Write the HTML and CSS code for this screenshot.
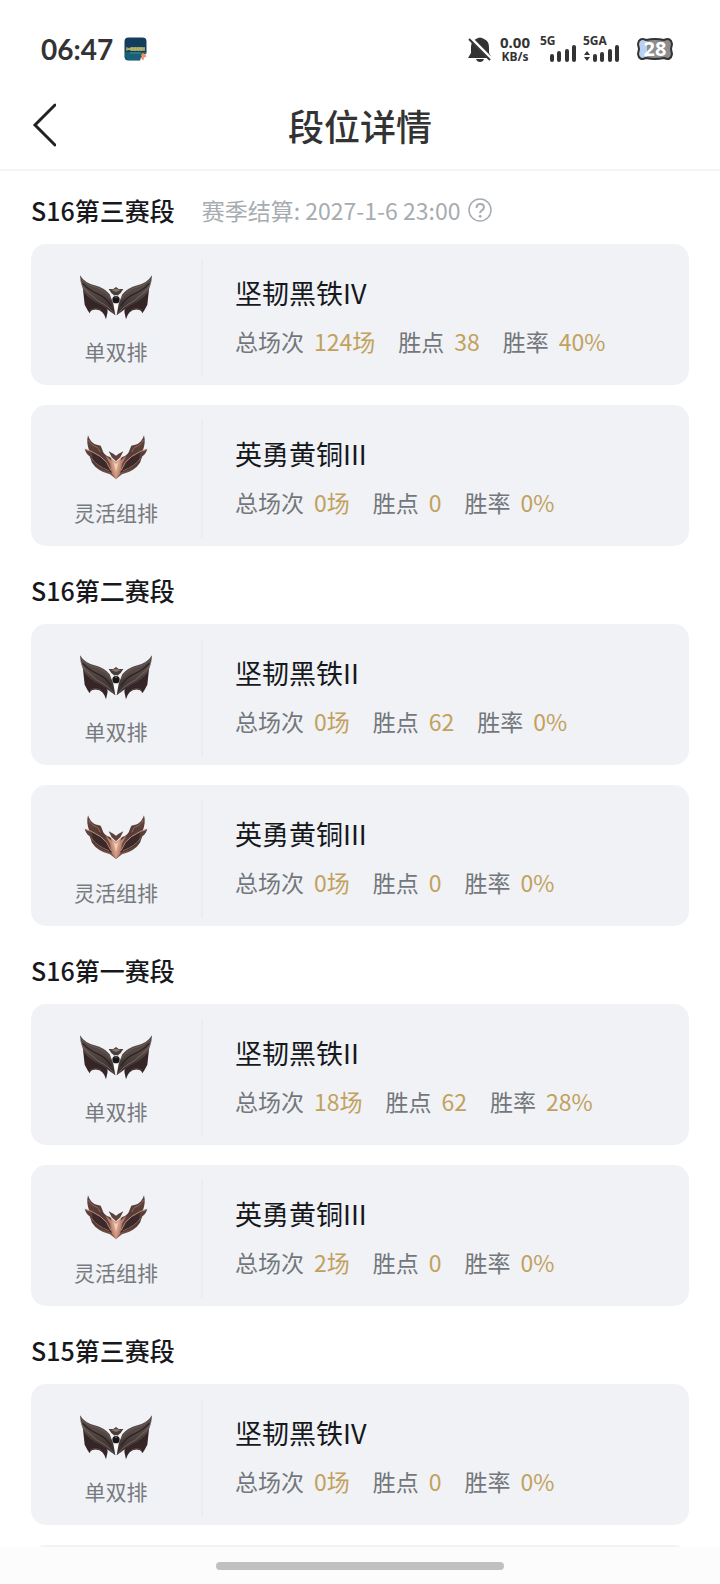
FILE: index.html
```html
<!DOCTYPE html>
<html lang="zh-CN">
<head>
    <meta charset="UTF-8">
    <meta name="viewport" content="width=device-width, initial-scale=1.0">
    <title>段位详情</title>
    <link rel="stylesheet" href="styles.css">
</head>
<body>
    <!-- 段位徽章 -->
    <svg class="defs" aria-hidden="true">
        <defs>
            <linearGradient id="ironFill" x1="0" y1="0" x2="0" y2="1">
                <stop offset="0" stop-color="#4f4646"/>
                <stop offset="0.4" stop-color="#564945"/>
                <stop offset="1" stop-color="#342a2a"/>
            </linearGradient>
            <linearGradient id="bronzeFill" x1="0" y1="0" x2="1" y2="1">
                <stop offset="0" stop-color="#60453f"/>
                <stop offset="0.5" stop-color="#553b36"/>
                <stop offset="1" stop-color="#805a4e"/>
            </linearGradient>
            <g id="ironWing">
                <path fill="#352527" d="M69 88 L74 134 Q82 150 89 160 Q92 149 102 149 Q118 147 127 157 Q134 164 138 178 L143 155 L138 126 Z"/>
                <path fill="url(#ironFill)" d="M60 46 Q74 69 104 76 Q134 84 149 103 L160 131 L166 166 Q140 146 118 132 Q90 120 74 98 Q62 76 60 46 Z"/>
                <path fill="none" stroke="#8a7b76" stroke-width="2" d="M62 62 Q68 86 91 103 Q109 122 132 133 Q148 142 164 163"/>
                <path fill="none" stroke="#2c2224" stroke-width="4" d="M68 70 Q84 88 110 100 Q138 112 154 138"/>
                <path fill="none" stroke="#756661" stroke-width="2" d="M66 60 Q82 77 109 82 Q136 91 152 117"/>
                <path fill="none" stroke="#66504f" stroke-width="2" d="M90 151 Q105 140 124 151"/>
            </g>
            <g id="bronzeWing">
                <path fill="url(#bronzeFill)" d="M84 43 Q90 62 105 70 L122 74 L127 86 Q130 102 150 108 L165 126 L168 174 L150 160 Q112 150 96 125 L89 106 Q78 99 74 83 L88 90 Q78 64 84 43 Z"/>
                <path fill="#3a292a" d="M96 92 L121 106 L145 129 L156 155 Q125 147 100 122 Z"/>
                <path fill="none" stroke="#c68e7b" stroke-width="3" d="M76 85 L94 91 L122 107 L140 124 L153 149"/>
                <path fill="none" stroke="#946759" stroke-width="3" d="M86 57 Q93 74 113 79 L121 94 M94 112 Q110 135 148 150"/>
                <path fill="#bd8571" d="M137 104 L166 130 L168 174 L156 158 L150 128 Z"/>
            </g>
        </defs>
        <symbol id="iron" viewBox="60 42 216 144">
            <path fill="#fafafa" d="M155 126 L168 116 L181 126 L173 148 L168 162 L163 148 Z"/>
            <use href="#ironWing"/>
            <use href="#ironWing" transform="matrix(-1 0 0 1 336 0)"/>
            <path fill="#493d3a" d="M146 87 L160 87 L168 81 L176 87 L190 87 L182 99 L174 106 L162 106 L154 99 Z"/>
            <path fill="#86766f" d="M153 90 L168 86 L183 90 L168 96 Z"/>
            <circle cx="168" cy="119" r="11" fill="#171417"/>
            <path fill="#4c4b4b" d="M161 106 L168 110 L175 106 L171 114 L165 114 Z"/>
        </symbol>
        <symbol id="bronze" viewBox="72 42 192 144">
            <use href="#bronzeWing"/>
            <use href="#bronzeWing" transform="matrix(-1 0 0 1 336 0)"/>
            <path fill="#d29c84" d="M153 112 L168 123 L183 112 L178 141 L168 175 L158 141 Z"/>
            <path fill="#f1cdb9" d="M160 122 L168 129 L176 122 L168 152 Z"/>
            <path fill="#5e413d" d="M146 91 L160 98 L168 104 L176 98 L190 91 L181 109 L168 121 L155 109 Z"/>
        </symbol>
    </svg>

    <div class="app">
        <!-- 状态栏 -->
        <div class="status-bar">
            <span class="clock">06:47</span>
            <svg class="app-icon" width="24" height="24" viewBox="0 0 24 24" aria-hidden="true">
                <rect x="0.5" y="0.5" width="22" height="23" rx="4" fill="#123d5c"/>
                <path d="M1 15h21v4q0 4-4 4H5q-4 0-4-4z" fill="#176078"/>
                <path d="M2 10l3 1 2-1h14v4H7l-2-1-3 1z" fill="#8c985f"/>
                <path d="M3 12h18M8 10v4M11 10v4M14 10v4M17 10v4" stroke="#c7b76b"/>
                <path d="M6 16h11" stroke="#4d8c8b"/>
                <path d="M24 16v8h-8q1-7 8-8z" fill="#fff"/>
                <path d="M17 18h5M19 16v7M17 21l5-2" stroke="#f2905e" stroke-width="1.5"/>
            </svg>
            <div class="status-right">
                <svg class="bell" width="24" height="26" viewBox="0 0 24 26" aria-hidden="true">
                    <path d="M3 17V11q0-6 5-8 4-3 8 0 5 2 5 8v6l3 5H0z" fill="#333"/>
                    <path d="M8 23h8q-1 3-4 3t-4-3z" fill="#333"/>
                    <path d="M2 2l21 21" stroke="#fff" stroke-width="4"/>
                    <path d="M1 3l21 21" stroke="#333" stroke-width="2"/>
                </svg>
                <span class="speed"><span>0.00</span><small>KB/s</small></span>
                <span class="signal">
                    <span>5G</span>
                    <svg width="36" height="17" viewBox="0 0 36 17" aria-hidden="true">
                        <path d="M12 11v4M19 8v7M27 6v9M34 2v13" stroke="#333" stroke-width="4" stroke-linecap="round"/>
                    </svg>
                </span>
                <span class="signal">
                    <span>5GA</span>
                    <svg width="37" height="17" viewBox="0 0 37 17" aria-hidden="true">
                        <path d="M1 10l3-4 3 4zM1 12h6l-3 4z" fill="#333"/>
                        <path d="M12 11v4M19 9v6M27 6v9M34 2v13" stroke="#333" stroke-width="4" stroke-linecap="round"/>
                    </svg>
                </span>
                <span class="battery">
                    <svg width="38" height="24" viewBox="0 0 38 24" aria-hidden="true">
                        <path d="M10 3q9-2 18 0 7-3 8 4l-1 5 1 5q-1 7-8 4-9 2-18 0-7 3-8-4l1-5-1-5Q3 0 10 3z" fill="#8d8d8d"/>
                        <path d="M11 3q-8-3-9 4l1 5-1 5q1 7 9 4z" fill="#b9d2f3"/>
                        <path d="M10 3q9-2 18 0 7-3 8 4l-1 5 1 5q-1 7-8 4-9 2-18 0-7 3-8-4l1-5-1-5Q3 0 10 3z" fill="none" stroke="#333" stroke-width="2"/>
                    </svg>
                    <span>28</span>
                </span>
            </div>
        </div>

        <!-- 标题栏 -->
        <header class="nav-bar">
            <button class="back-btn" type="button" aria-label="返回">
                <svg width="24" height="46" viewBox="0 0 24 46" aria-hidden="true">
                    <path d="M23 3L3 23l20 20" fill="none" stroke="#222" stroke-width="3" stroke-linecap="round"/>
                </svg>
            </button>
            <h1>段位详情</h1>
        </header>

        <main class="content">
            <section class="season">
                <div class="season-head">
                    <h2>S16第三赛段</h2>
                    <span class="settle">赛季结算: 2027-1-6 23:00</span>
                    <button class="help-btn" type="button" aria-label="结算说明">
                        <svg width="24" height="24" viewBox="0 0 24 24" aria-hidden="true">
                            <circle cx="12" cy="12" r="11" fill="none" stroke="#a7acb1" stroke-width="1.5"/>
                            <path d="M8.500 10q0-4 3.700-4t3.700 3.200q0 2-2 3.200t-1.700 2.800" fill="none" stroke="#a7acb1" stroke-width="2"/>
                            <circle cx="12.200" cy="18.300" r="1.400" fill="#a7acb1"/>
                        </svg>
                    </button>
                </div>
                <article class="card">
                    <div class="queue"><svg class="emblem"><use href="#iron"/></svg><span>单双排</span></div>
                    <div class="info">
                        <h3>坚韧黑铁IV</h3>
                        <ul class="stats">
                            <li>总场次 <b>124场</b></li>
                            <li>胜点 <b>38</b></li>
                            <li>胜率 <b>40%</b></li>
                        </ul>
                    </div>
                </article>
                <article class="card">
                    <div class="queue"><svg class="emblem"><use href="#bronze"/></svg><span>灵活组排</span></div>
                    <div class="info">
                        <h3>英勇黄铜III</h3>
                        <ul class="stats">
                            <li>总场次 <b>0场</b></li>
                            <li>胜点 <b>0</b></li>
                            <li>胜率 <b>0%</b></li>
                        </ul>
                    </div>
                </article>
            </section>

            <section class="season">
                <div class="season-head">
                    <h2>S16第二赛段</h2>
                </div>
                <article class="card">
                    <div class="queue"><svg class="emblem"><use href="#iron"/></svg><span>单双排</span></div>
                    <div class="info">
                        <h3>坚韧黑铁II</h3>
                        <ul class="stats">
                            <li>总场次 <b>0场</b></li>
                            <li>胜点 <b>62</b></li>
                            <li>胜率 <b>0%</b></li>
                        </ul>
                    </div>
                </article>
                <article class="card">
                    <div class="queue"><svg class="emblem"><use href="#bronze"/></svg><span>灵活组排</span></div>
                    <div class="info">
                        <h3>英勇黄铜III</h3>
                        <ul class="stats">
                            <li>总场次 <b>0场</b></li>
                            <li>胜点 <b>0</b></li>
                            <li>胜率 <b>0%</b></li>
                        </ul>
                    </div>
                </article>
            </section>

            <section class="season">
                <div class="season-head">
                    <h2>S16第一赛段</h2>
                </div>
                <article class="card">
                    <div class="queue"><svg class="emblem"><use href="#iron"/></svg><span>单双排</span></div>
                    <div class="info">
                        <h3>坚韧黑铁II</h3>
                        <ul class="stats">
                            <li>总场次 <b>18场</b></li>
                            <li>胜点 <b>62</b></li>
                            <li>胜率 <b>28%</b></li>
                        </ul>
                    </div>
                </article>
                <article class="card">
                    <div class="queue"><svg class="emblem"><use href="#bronze"/></svg><span>灵活组排</span></div>
                    <div class="info">
                        <h3>英勇黄铜III</h3>
                        <ul class="stats">
                            <li>总场次 <b>2场</b></li>
                            <li>胜点 <b>0</b></li>
                            <li>胜率 <b>0%</b></li>
                        </ul>
                    </div>
                </article>
            </section>

            <section class="season">
                <div class="season-head">
                    <h2>S15第三赛段</h2>
                </div>
                <article class="card">
                    <div class="queue"><svg class="emblem"><use href="#iron"/></svg><span>单双排</span></div>
                    <div class="info">
                        <h3>坚韧黑铁IV</h3>
                        <ul class="stats">
                            <li>总场次 <b>0场</b></li>
                            <li>胜点 <b>0</b></li>
                            <li>胜率 <b>0%</b></li>
                        </ul>
                    </div>
                </article>
                <div class="card card-empty"></div>
            </section>
        </main>

        <!-- 底部手势条 -->
        <div class="home-bar"><div class="home-handle"></div></div>
    </div>
</body>
</html>
```

FILE: styles.css
```css
* {
    box-sizing: border-box;
}
body {
    margin: 0;
    background-color: #fff;
    color: #17181c;
    font-family: "Noto Sans CJK SC", "Noto Sans", sans-serif;
}
h1, h2, h3, ul {
    margin: 0;
    padding: 0;
    font-weight: 500;
}
button {
    display: flex;
    padding: 0;
    border: none;
    background: none;
    cursor: pointer;
}
svg {
    display: block;
}
.defs {
    position: absolute;
    width: 0;
    height: 0;
}
.app {
    display: flex;
    flex-direction: column;
    height: 100vh;
}

/* 状态栏 */
.status-bar {
    display: flex;
    flex-shrink: 0;
    align-items: center;
    height: 84px;
    padding: 14px 46px 0 41px;
    color: #333;
}
.clock {
    font: 700 28px/32px Lato, sans-serif;
}
.app-icon {
    margin-left: 11px;
}
.status-right {
    display: flex;
    align-items: center;
    margin-left: auto;
    font-family: "Noto Sans", sans-serif;
    font-weight: 700;
}
.speed {
    display: flex;
    flex-direction: column;
    align-items: center;
    margin: 0 10px 0 8px;
    font-size: 15px;
    line-height: 15px;
}
.speed small {
    font-size: 12px;
    line-height: 13px;
}
.signal {
    display: flex;
    flex-direction: column;
    margin-right: 7px;
    font-size: 12px;
    line-height: 9px;
}
.battery {
    display: grid;
    place-items: center;
    margin-left: 9px;
    color: #fff;
    font-size: 20px;
    line-height: 24px;
}
.battery > * {
    grid-area: 1 / 1;
}

/* 标题栏 */
.nav-bar {
    display: grid;
    grid-template-columns: 48px 1fr 48px;
    flex-shrink: 0;
    align-items: center;
    height: 87px;
    padding: 0 32px 4px;
    border-bottom: 2px solid #f5f5f6;
}
.nav-bar h1 {
    color: #333;
    font-size: 36px;
    line-height: 48px;
    text-align: center;
}

/* 赛段列表 */
.content {
    display: flex;
    flex: 1;
    flex-direction: column;
    gap: 27px;
    min-height: 0;
    padding: 22px 31px 0;
    overflow-y: auto;
    scrollbar-width: none;
}
.season {
    display: flex;
    flex-direction: column;
    flex-shrink: 0;
    gap: 20px;
}
.season-head {
    display: flex;
    align-items: center;
    height: 34px;
    margin-bottom: -3px;
}
.season-head h2 {
    font-size: 25px;
    line-height: 34px;
}
.settle {
    margin-left: 27px;
    color: #a7acb1;
    font-size: 23px;
    line-height: 34px;
}
.help-btn {
    margin-left: 8px;
}

/* 段位卡片 */
.card {
    display: flex;
    border-radius: 15px;
    background-color: #f0f2f6;
}
.card-empty {
    min-height: 141px;
}
.queue {
    display: flex;
    flex-direction: column;
    align-items: center;
    gap: 17px;
    width: 170px;
    padding: 30px 0 22px;
    color: #777a7e;
    font-size: 21px;
    line-height: 24px;
}
.emblem {
    width: 72px;
    height: 48px;
}
.info {
    display: flex;
    flex: 1;
    flex-direction: column;
    gap: 16px;
    margin: 15px 0 8px;
    padding: 17px 0 0 32px;
    border-left: 2px solid #e9ecf0;
}
.info h3 {
    font-size: 27px;
    font-weight: 400;
    line-height: 34px;
}
.stats {
    display: flex;
    gap: 23px;
    color: #73777b;
    font-size: 23px;
    line-height: 30px;
    list-style: none;
}
.stats li {
    display: flex;
    gap: 10px;
    font-weight: 400;
}
.stats b {
    color: #c2a15d;
    font-weight: 400;
}

/* 底部手势条 */
.home-bar {
    display: flex;
    flex-shrink: 0;
    justify-content: center;
    height: 37px;
    padding-top: 15px;
    background-color: #fcfcfc;
}
.home-handle {
    width: 40%;
    height: 8px;
    border-radius: 4px;
    background-color: #c0c0c0;
}
```
